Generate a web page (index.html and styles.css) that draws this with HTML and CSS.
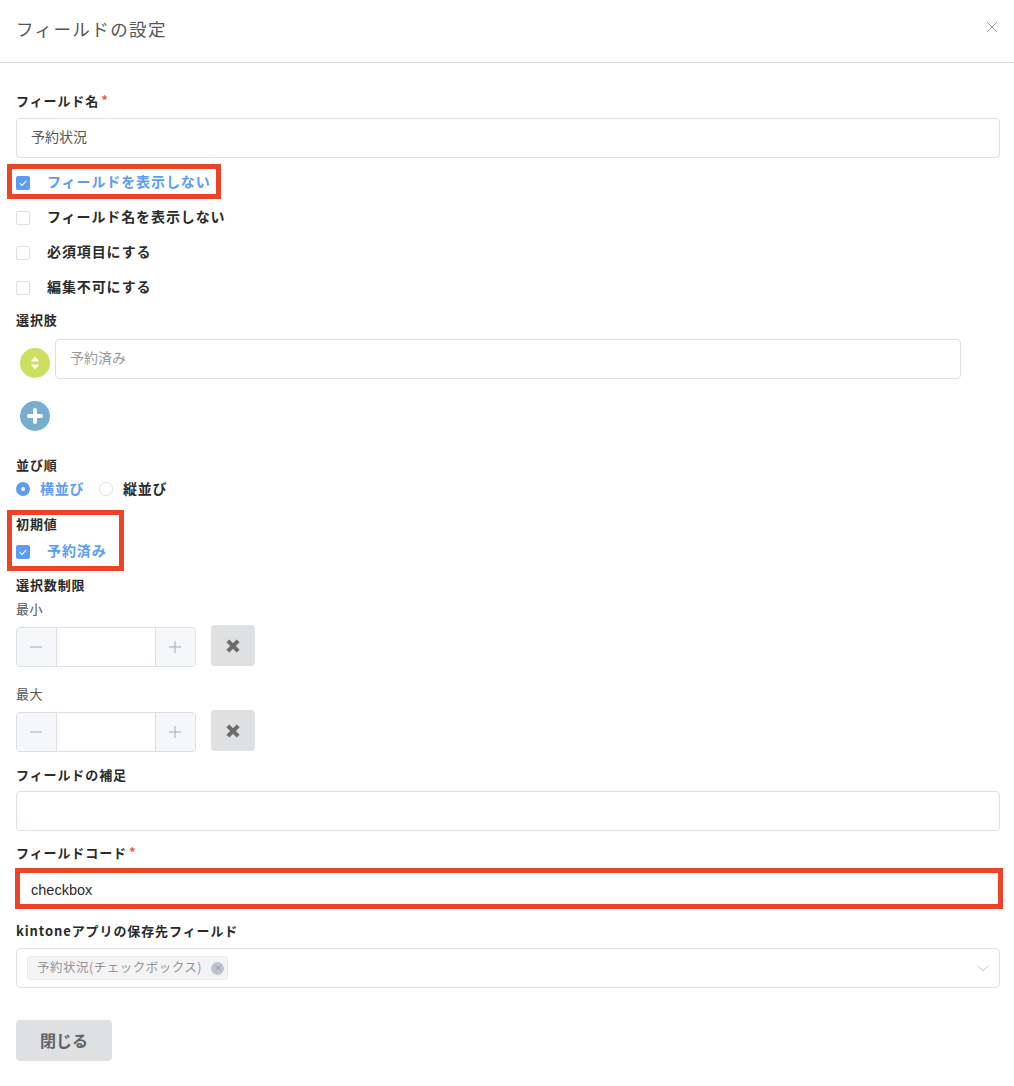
FILE: index.html
```html
<!DOCTYPE html>
<html lang="ja">
<head>
  <meta charset="UTF-8">
  <title>フィールドの設定</title>
  <link rel="stylesheet" href="styles.css">
</head>
<body>
  <div class="modal">
    <div class="modal-header">
      <div class="modal-title">フィールドの設定</div>
      <svg class="close-icon" width="12" height="12" viewBox="0 0 12 12"><path d="M1 1l10 10M11 1L1 11" stroke="#999" stroke-width="1" fill="none"/></svg>
    </div>

    <div class="modal-body">
      <div class="label first">フィールド名<span class="required">*</span></div>
      <div class="text-input name-input">予約状況</div>

      <div class="check-list">
        <div class="check-row active mark-hide">
          <span class="checkbox checked"><svg width="14" height="14" viewBox="0 0 14 14"><path d="M3.6 7.2l2.4 2.3 4.4-4.6" stroke="#fff" stroke-width="1.1" fill="none"/></svg></span>
          <span>フィールドを表示しない</span>
        </div>
        <div class="check-row"><span class="checkbox"></span><span>フィールド名を表示しない</span></div>
        <div class="check-row"><span class="checkbox"></span><span>必須項目にする</span></div>
        <div class="check-row"><span class="checkbox"></span><span>編集不可にする</span></div>
      </div>

      <div class="label">選択肢</div>
      <div class="option-row">
        <span class="round-btn sort-btn"><svg width="14" height="16" viewBox="0 0 14 16"><path d="M7 1.5l4.2 5H2.8zM7 14.5l4.2-5H2.8z" fill="#fff"/></svg></span>
        <div class="text-input muted option-input">予約済み</div>
      </div>
      <span class="round-btn add-btn"><svg width="16" height="16" viewBox="0 0 16 16"><path d="M8 2v12M2 8h12" stroke="#fff" stroke-width="4" stroke-linecap="round" fill="none"/></svg></span>

      <div class="label order-label">並び順</div>
      <div class="radio-row">
        <span class="radio checked"></span><span class="radio-text active">横並び</span>
        <span class="radio"></span><span class="radio-text">縦並び</span>
      </div>

      <div class="default-group">
        <div class="label">初期値</div>
        <div class="check-row active default-row">
          <span class="checkbox checked"><svg width="14" height="14" viewBox="0 0 14 14"><path d="M3.6 7.2l2.4 2.3 4.4-4.6" stroke="#fff" stroke-width="1.1" fill="none"/></svg></span>
          <span>予約済み</span>
        </div>
      </div>

      <div class="label limit-label">選択数制限</div>
      <div class="sub-label min-label">最小</div>
      <div class="number-row">
        <div class="number-input">
          <span class="step"><svg width="12" height="12" viewBox="0 0 12 12"><path d="M0 6h12" stroke="#aaa" stroke-width="1"/></svg></span>
          <span class="number-value"></span>
          <span class="step step-plus"><svg width="12" height="12" viewBox="0 0 12 12"><path d="M0 6h12M6 0v12" stroke="#aaa" stroke-width="1"/></svg></span>
        </div>
        <span class="clear-btn"><svg width="16" height="16" viewBox="0 0 14 14"><path d="M2.5 2.5l9 9M11.5 2.5l-9 9" stroke="#6b6b6b" stroke-width="3.6" fill="none"/></svg></span>
      </div>
      <div class="sub-label max-label">最大</div>
      <div class="number-row">
        <div class="number-input">
          <span class="step"><svg width="12" height="12" viewBox="0 0 12 12"><path d="M0 6h12" stroke="#aaa" stroke-width="1"/></svg></span>
          <span class="number-value"></span>
          <span class="step step-plus"><svg width="12" height="12" viewBox="0 0 12 12"><path d="M0 6h12M6 0v12" stroke="#aaa" stroke-width="1"/></svg></span>
        </div>
        <span class="clear-btn"><svg width="16" height="16" viewBox="0 0 14 14"><path d="M2.5 2.5l9 9M11.5 2.5l-9 9" stroke="#6b6b6b" stroke-width="3.6" fill="none"/></svg></span>
      </div>

      <div class="label note-label">フィールドの補足</div>
      <div class="text-input note-input"></div>

      <div class="label code-label">フィールドコード<span class="required">*</span></div>
      <div class="text-input code-input">checkbox</div>

      <div class="label app-label">kintoneアプリの保存先フィールド</div>
      <div class="select-box">
        <span class="chip"><span class="chip-text">予約状況(チェックボックス)</span><span class="chip-close"><svg width="6" height="6" viewBox="0 0 6 6"><path d="M.5.5l5 5M5.5.5l-5 5" stroke="#8a8d94" stroke-width=".8"/></svg></span></span>
        <svg class="chevron" width="12" height="7" viewBox="0 0 12 7"><path d="M.5.5L6 6 11.5.5" stroke="#c4c6cc" stroke-width="1" fill="none"/></svg>
      </div>

      <div class="close-btn">閉じる</div>
    </div>
  </div>
</body>
</html>
```

FILE: styles.css
```css
body {
  margin: 0;
  background: #ffffff;
  font-family: "Noto Sans CJK JP", "Noto Sans", sans-serif;
  color: #2b2b2b;
}

.modal {
  width: 1014px;
  height: 1086px;
  overflow: hidden;
}

.modal-header {
  display: flex;
  justify-content: space-between;
  align-items: center;
  height: 62px;
  padding: 0 16px;
  border-bottom: 1px solid #d6d6d6;
  box-sizing: content-box;
  width: 982px;
}

.modal-title {
  font-size: 17.5px;
  letter-spacing: 1.4px;
  color: #555;
  margin: -6px 0 0;
}

.close-icon {
  margin: -8px 0 0 0;
}

.modal-body {
  padding: 0 14px 0 16px;
}

.label {
  height: 20px;
  line-height: 20px;
  font-size: 13px;
  font-weight: 700;
  letter-spacing: 0.9px;
  color: #2b2b2b;
}

.label.first { padding-top: 28px; }

.required {
  color: #e0643c;
  font-size: 13px;
  font-weight: 700;
  margin-left: 2px;
  position: relative;
  top: -1px;
}

.text-input {
  height: 40px;
  line-height: 34px;
  box-sizing: border-box;
  border: 1px solid #dcdfe6;
  border-radius: 4px;
  padding: 0 14px;
  font-size: 14px;
  color: #555;
  background: #fff;
}

.name-input { margin-top: 7px; }

.check-list { margin-top: 12px; }

.check-row {
  display: flex;
  align-items: center;
  gap: 17px;
  height: 25px;
  margin-bottom: 10px;
  font-size: 14px;
  font-weight: 700;
  letter-spacing: 0.9px;
  line-height: 25px;
}

.check-row span:last-child { margin-bottom: 2px; }

.check-row.active { color: #5a9cf8; }

.checkbox {
  display: block;
  width: 14px;
  height: 14px;
  box-sizing: border-box;
  border: 1px solid #dcdfe6;
  border-radius: 2px;
  background: #fff;
  flex: none;
}

.checkbox.checked {
  background: #5a9cf8;
  border: none;
}

.checkbox svg { display: block; }

.mark-hide {
  position: relative;
  width: 195px;
}

.mark-hide::after {
  content: "";
  position: absolute;
  left: -9px;
  right: -10px;
  top: -6px;
  bottom: -4px;
  border: 5px solid #ee4326;
}

.option-row {
  display: flex;
  align-items: flex-end;
  gap: 5px;
  margin: 9px 0 0 4px;
}

.round-btn {
  display: flex;
  align-items: center;
  justify-content: center;
  width: 30px;
  height: 30px;
  border-radius: 50%;
  flex: none;
}

.sort-btn {
  background: #cddf5e;
  margin-bottom: 1px;
}

.add-btn {
  background: #76add1;
  margin: 22px 0 0 4px;
}

.muted { color: #999; }

.option-input { width: 906px; }

.order-label { margin-top: 24px; }

.radio-row {
  display: flex;
  align-items: center;
  height: 24px;
  margin-top: 2px;
}

.radio {
  width: 14px;
  height: 14px;
  box-sizing: border-box;
  border: 1px solid #dcdfe6;
  border-radius: 50%;
  background: #fff;
  margin-right: 10px;
}

.radio.checked {
  border: 5px solid #5a9cf8;
}

.radio-text {
  font-size: 14px;
  font-weight: 700;
  letter-spacing: 0.7px;
  line-height: 24px;
  margin: 0 15px 2px 0;
}

.radio-text.active { color: #5a9cf8; }

.default-group {
  position: relative;
  margin-top: 13px;
}

.default-group::after {
  content: "";
  position: absolute;
  left: -9px;
  top: -4px;
  width: 107px;
  height: 51px;
  border: 5px solid #ee4326;
}

.default-row {
  margin: 5px 0 0;
}

.limit-label { margin-top: 11px; }

.sub-label {
  height: 20px;
  line-height: 20px;
  font-size: 13px;
  letter-spacing: 0.5px;
  color: #555;
}

.min-label { margin-top: 4px; }
.max-label { margin-top: 17px; }

.number-row {
  display: flex;
  gap: 15px;
  margin-top: 8px;
  height: 40px;
}

.number-input {
  display: flex;
  width: 180px;
  height: 40px;
  box-sizing: border-box;
  border: 1px solid #dcdfe6;
  border-radius: 4px;
  overflow: hidden;
}

.step {
  display: flex;
  align-items: center;
  justify-content: center;
  width: 39px;
  padding-right: 1px;
  box-sizing: border-box;
  background: #f5f7fa;
  flex: none;
}

.number-value {
  flex: 1;
  border-left: 1px solid #dcdfe6;
  border-right: 1px solid #dcdfe6;
  background: #fff;
}

.clear-btn {
  display: flex;
  align-items: center;
  justify-content: center;
  width: 44px;
  height: 41px;
  margin-top: -2px;
  border-radius: 4px;
  background: #dfe0e2;
}

.note-label { margin-top: 13px; }
.note-input { margin-top: 6px; }
.code-label { margin-top: 12px; }

.code-input {
  position: relative;
  margin-top: 6px;
  color: #2b2b2b;
  font-family: "Liberation Sans", sans-serif;
  font-size: 14.5px;
  line-height: 40px;
}

.code-input::after {
  content: "";
  position: absolute;
  left: -2px;
  right: -4px;
  top: -2px;
  bottom: -1px;
  border: 5px solid #ee4326;
}

.app-label {
  margin-top: 12px;
}

.select-box {
  display: flex;
  align-items: center;
  justify-content: space-between;
  height: 40px;
  box-sizing: border-box;
  margin-top: 7px;
  padding: 0 10px 0 10px;
  border: 1px solid #dcdfe6;
  border-radius: 4px;
}

.chip {
  display: flex;
  align-items: center;
  gap: 9px;
  height: 24px;
  padding: 0 3px 0 9px;
  box-sizing: border-box;
  background: #f4f4f5;
  border: 1px solid #e9e9eb;
  border-radius: 4px;
  font-size: 12.5px;
  letter-spacing: 0.5px;
  color: #909399;
}

.chip-text { margin-bottom: 3px; }

.chip-close {
  display: flex;
  align-items: center;
  justify-content: center;
  width: 13px;
  height: 13px;
  border-radius: 50%;
  background: #c0c4cc;
}

.close-btn {
  width: 96px;
  height: 41px;
  margin-top: 32px;
  border-radius: 4px;
  background: #dfe0e2;
  color: #606266;
  font-size: 16px;
  font-weight: 700;
  line-height: 40px;
  text-align: center;
}
```
